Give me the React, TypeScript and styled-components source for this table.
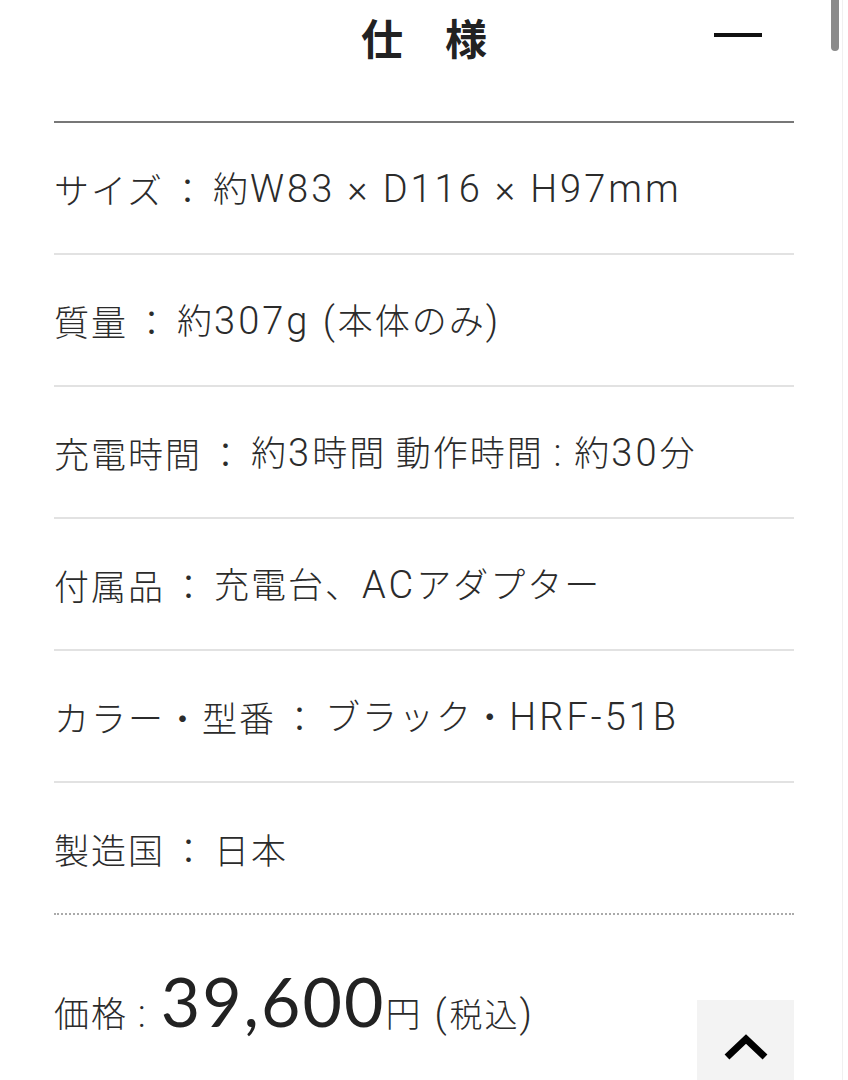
import React from "react";
import styled, { createGlobalStyle } from "styled-components";

const Global = createGlobalStyle`
  html, body { margin: 0; padding: 0; background: #fff; }
  body {
    font-family: "Noto Sans CJK JP", sans-serif;
    color: #2b2b2b;
  }
`;

const Page = styled.div`
  width: 848px;
  box-sizing: border-box;
  padding: 0 54px;
  height: 1080px;
  overflow: hidden;
`;

const Header = styled.header`
  display: grid;
  grid-template-columns: 1fr auto 1fr;
  align-items: start;
  height: 121px;
  border-bottom: 2px solid #777;
`;

const Title = styled.h2`
  grid-column: 2;
  margin: 10px 0 0;
  font-family: "Noto Sans CJK JP", sans-serif;
  font-weight: 700;
  font-size: 42px;
  line-height: 54px;
  color: #222;
`;

const Minus = styled.span`
  grid-column: 3;
  justify-self: end;
  margin: 33px 32px 0 0;
  width: 48px;
  height: 4px;
  background: #111;
`;

const List = styled.dl`
  margin: 0;
  padding: 0;
`;

const Row = styled.div<{ $last?: boolean }>`
  height: 130px;
  display: flex;
  align-items: center;
  font-size: 35px;
  font-weight: 300;
  letter-spacing: 2px;
  line-height: 1;
  white-space: pre;
  border-bottom: 2px ${(p) => (p.$last ? "dotted #aaa" : "solid #e2e2e2")};
`;

const Label = styled.dt`
  margin: 0;
`;

const Sep = styled.span`
  margin: 0 6px;
`;

const Value = styled.dd`
  margin: 0;
`;

const Latin = styled.span`
  font-family: "Roboto", "Liberation Sans", sans-serif;
  font-size: 38px;
  font-weight: 300;
  letter-spacing: 3px;
`;

const Price = styled.div`
  display: flex;
  align-items: baseline;
  padding-top: 52px;
  line-height: 1;
  white-space: pre;
`;

const PriceLabel = styled.span`
  font-size: 35px;
  font-weight: 300;
  letter-spacing: 2px;
`;

const PriceValue = styled.span`
  font-family: "Lato", "Liberation Sans", sans-serif;
  font-size: 68px;
  color: #222;
  margin-left: 12px;
  letter-spacing: 2px;
`;

const Yen = styled.span`
  font-size: 35px;
  font-weight: 300;
`;

const Tax = styled.span`
  font-size: 33px;
  font-weight: 300;
  letter-spacing: 2px;
  margin-left: 14px;
`;

const TopButton = styled.button`
  position: fixed;
  top: 1000px;
  left: 697px;
  width: 97px;
  height: 94px;
  border: none;
  padding: 0;
  background: #f3f3f3;
  display: flex;
  align-items: center;
  justify-content: center;
`;

const ScrollThumb = styled.div`
  position: fixed;
  top: 0;
  left: 831px;
  width: 8px;
  height: 51px;
  background: #8a8a8a;
  border-radius: 0 0 4px 4px;
`;

const EdgeLine = styled.div`
  position: fixed;
  top: 0;
  left: 842px;
  width: 1px;
  height: 1080px;
  background: #f0f0f0;
`;

const LATIN = /([A-Za-z0-9×().,:\-]+(?: [A-Za-z0-9×().,:\-]+)*)/;

function Mixed({ text }: { text: string }) {
  const parts = text.split(LATIN);
  return (
    <>
      {parts.map((p, i) =>
        i % 2 === 1 ? <Latin key={i}>{p}</Latin> : p ? <React.Fragment key={i}>{p}</React.Fragment> : null
      )}
    </>
  );
}

const specs = [
  { label: "サイズ", value: "約W83 × D116 × H97mm" },
  { label: "質量", value: "約307g (本体のみ)" },
  { label: "充電時間", value: "約3時間 動作時間 : 約30分" },
  { label: "付属品", value: "充電台、ACアダプター" },
  { label: "カラー・型番", value: "ブラック・HRF-51B" },
  { label: "製造国", value: "日本" },
];

export default function App() {
  return (
    <>
      <Global />
      <Page>
        <Header>
          <Title>仕　様</Title>
          <Minus />
        </Header>
        <List>
          {specs.map((s, i) => (
            <Row key={i} $last={i === specs.length - 1}>
              <Label>{s.label}</Label>
              <Sep>：</Sep>
              <Value>
                <Mixed text={s.value} />
              </Value>
            </Row>
          ))}
        </List>
        <Price>
          <PriceLabel>
            <Mixed text="価格 :" />
          </PriceLabel>
          <PriceValue>39,600</PriceValue>
          <Yen>円</Yen>
          <Tax>
            <Mixed text="(税込)" />
          </Tax>
        </Price>
      </Page>
      <TopButton aria-label="ページトップへ">
        <svg width="48" height="30" viewBox="0 0 48 30">
          <polyline
            points="5,25 24,7 43,25"
            fill="none"
            stroke="#000"
            strokeWidth="7"
            strokeLinejoin="miter"
          />
        </svg>
      </TopButton>
      <ScrollThumb />
      <EdgeLine />
    </>
  );
}
